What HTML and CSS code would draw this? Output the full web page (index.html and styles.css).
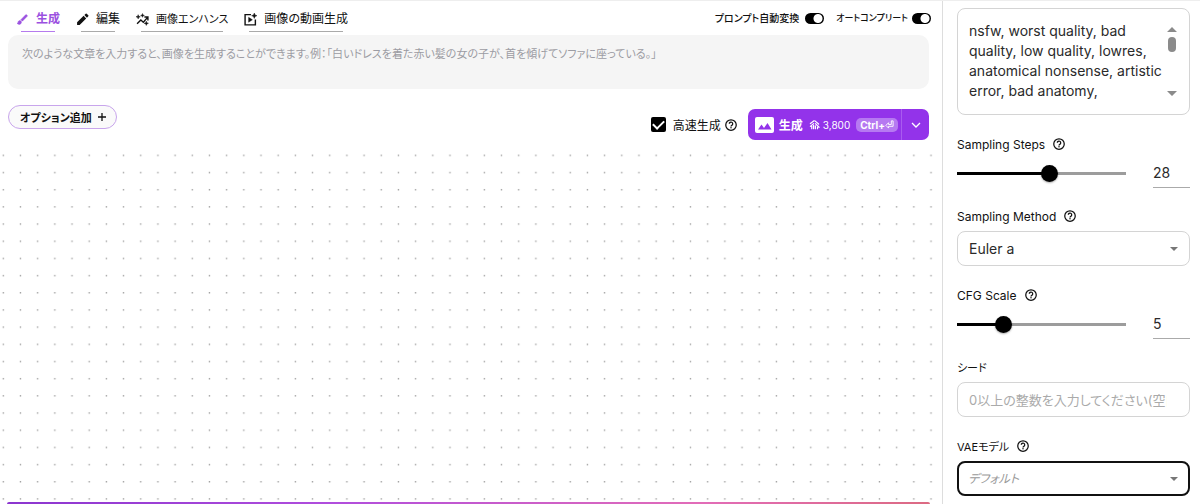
FILE: index.html
```html
<!DOCTYPE html>
<html lang="ja">
<head>
<meta charset="utf-8">
<meta name="viewport" content="width=device-width, initial-scale=1">
<title>画像生成</title>
<link rel="stylesheet" href="styles.css">
</head>
<body>
<svg class="defs" aria-hidden="true">
  <symbol id="help" viewBox="0 0 24 24"><circle cx="12" cy="12" r="10.500" fill="none" stroke="currentColor" stroke-width="2.500"/><path d="M8.600 9.700a3.400 3.400 0 1 1 5.300 2.700c-1.200.8-1.900 1.300-1.900 2.600" fill="none" stroke="currentColor" stroke-width="2.500"/><circle cx="12" cy="17.500" r="1.500" fill="currentColor"/></symbol>
</svg>
<div class="app">
  <main class="main">
    <header class="topbar">
      <nav class="tabs">
        <button class="tab active" type="button">
          <svg class="tab-icon" viewBox="0 0 24 24" fill="currentColor"><path d="M7 14c-1.660 0-3 1.340-3 3 0 1.310-1.160 2-2 2 .92 1.220 2.490 2 4 2 2.210 0 4-1.790 4-4 0-1.660-1.340-3-3-3zm13.710-9.370-1.340-1.340a1 1 0 0 0-1.410 0L9 12.250 11.750 15l8.960-8.960a1 1 0 0 0 0-1.410z" stroke="currentColor"/></svg>
          <span>生成</span>
        </button>
        <button class="tab" type="button">
          <svg class="tab-icon" viewBox="0 0 24 24" fill="currentColor"><path d="M2 17.250V22h4.750L18.800 9.940l-4.750-4.750zM22.700 6.040a1.300 1.300 0 0 0 0-1.800l-2.940-2.950a1.300 1.300 0 0 0-1.800 0l-2.500 2.500 4.750 4.750z"/></svg>
          <span>編集</span>
        </button>
        <button class="tab" type="button">
          <svg class="tab-icon" viewBox="0 0 24 24"><path d="M2 20l7-7 4.500 4L21 8.500M15.500 7.500H22V14" fill="none" stroke="currentColor" stroke-width="2.600"/><path d="M12 1l1 2.500L15.500 4.500 13 5.500 12 8l-1-2.500L8.500 4.500 11 3.500zM4 3l1.100 2.900L8 7 5.100 8.100 4 11 2.900 8.100 0 7l2.900-1.100zM19 15l1.100 2.900L23 19l-2.900 1.100L19 23l-1.100-2.900L15 19l2.900-1.100z" fill="currentColor" stroke="currentColor" stroke-width=".8"/></svg>
          <span class="kana">画像エンハンス</span>
        </button>
        <button class="tab" type="button">
          <svg class="tab-icon" viewBox="0 0 24 24"><path d="M13 3H2v19h19V12" fill="none" stroke="currentColor" stroke-width="2.600"/><path d="M8.500 8v9l7-4.500zM19 0l1.500 3.500L24 5l-3.500 1.500L19 10l-1.500-3.500L14 5l3.500-1.500z" fill="currentColor" stroke="currentColor" stroke-width=".8"/></svg>
          <span>画像の動画生成</span>
        </button>
      </nav>
      <div class="switches">
        <label class="switch-label">プロンプト自動変換<input class="switch" type="checkbox" role="switch" checked></label>
        <label class="switch-label all-kana">オートコンプリート<input class="switch" type="checkbox" role="switch" checked></label>
      </div>
    </header>
    <textarea class="prompt" rows="2" aria-label="プロンプト" placeholder="次のような文章を入力すると、画像を生成することができます。例：「白いドレスを着た赤い髪の女の子が、首を傾げてソファに座っている。」"></textarea>
    <div class="actions">
      <button class="options" type="button">オプション追加
        <svg class="plus" viewBox="0 0 10 10"><path d="M5 1v8M1 5h8" stroke="currentColor" stroke-width="1.300"/></svg>
      </button>
      <div class="run">
        <label class="fast"><input class="check" type="checkbox" checked>高速生成</label>
        <svg class="help fast-help"><use href="#help"/></svg>
        <div class="generate">
          <button class="generate-main" type="button">
            <svg class="picture" viewBox="0 0 19 16"><rect width="19" height="16" rx="2" fill="#fff"/><path d="M3 12.500l3.500-5 2.500 3.500L12.500 6l4 6.500z" fill="#9333ea"/></svg>
            <span class="generate-text">生成</span>
            <svg class="coin" viewBox="0 0 12 12" fill="none" stroke="#fff" stroke-width="1.300" stroke-linecap="round"><path d="M1.500 5L5.500 2M1.500 8L5 5M3 10.500V7.500M5 10.500V7M6.500 2l4 3.500M7 5l4 4M7 7.500v3M9.300 9v1.500"/></svg>
            <span class="cost">3,800</span>
            <span class="shortcut">Ctrl+<svg class="enter" viewBox="0 0 10 10" fill="none" stroke="currentColor"><path d="M7 1h2v6H4v2L1 6l3-3v2h3z"/></svg></span>
          </button>
          <button class="generate-more" type="button" aria-label="その他">
            <svg class="chevron" viewBox="0 0 10 10"><path d="M1 3l4 4 4-4" fill="none" stroke="#fff" stroke-width="1.300"/></svg>
          </button>
        </div>
      </div>
    </div>
    <div class="canvas">
      <svg class="dots" aria-hidden="true">
        <defs><pattern id="dot" width="17.180" height="17.180" patternUnits="userSpaceOnUse"><circle cx="3.300" cy="9.300" r=".8" fill="#999"/></pattern></defs>
        <rect width="100%" height="100%" fill="url(#dot)"/>
      </svg>
    </div>
    <div class="result-edge"></div>
  </main>
  <aside class="side">
    <div class="negative">
      <textarea class="negative-text" rows="4" aria-label="ネガティブプロンプト">nsfw, worst quality, bad quality, low quality, lowres, anatomical nonsense, artistic error, bad anatomy,</textarea>
      <svg class="scroll" viewBox="0 0 10 72" fill="#8b8b8b" aria-hidden="true"><path d="M0 6l5-5 5 5zM0 65h10l-5 5z"/><rect x="1" y="11" width="8" height="15" rx="4"/></svg>
    </div>
    <section class="field">
      <div class="label"><label for="steps">Sampling Steps</label><svg class="help"><use href="#help"/></svg></div>
      <div class="slide-row">
        <input class="slider" id="steps" type="range" min="1" max="50" value="28" style="--fill:55%">
        <input class="number" type="text" inputmode="numeric" value="28" aria-label="Sampling Steps">
      </div>
    </section>
    <section class="field">
      <div class="label"><label for="method">Sampling Method</label><svg class="help"><use href="#help"/></svg></div>
      <div class="select-box">
        <select class="control" id="method"><option>Euler a</option></select>
        <svg class="caret" viewBox="0 0 8 4" fill="#777"><path d="M0 0h8L4 4z"/></svg>
      </div>
    </section>
    <section class="field">
      <div class="label"><label for="cfg">CFG Scale</label><svg class="help"><use href="#help"/></svg></div>
      <div class="slide-row">
        <input class="slider" id="cfg" type="range" min="0" max="20" value="5" style="--fill:25%">
        <input class="number" type="text" inputmode="numeric" value="5" aria-label="CFG Scale">
      </div>
    </section>
    <section class="field">
      <div class="label kana"><label for="seed">シード</label></div>
      <input class="control seed" id="seed" type="text" placeholder="0以上の整数を入力してください(空白">
    </section>
    <section class="field">
      <div class="label kana"><label for="vae">VAEモデル</label><svg class="help"><use href="#help"/></svg></div>
      <div class="select-box">
        <select class="control focused" id="vae"><option>デフォルト</option></select>
        <svg class="caret" viewBox="0 0 8 4" fill="#777"><path d="M0 0h8L4 4z"/></svg>
      </div>
    </section>
  </aside>
</div>
</body>
</html>
```
FILE: styles.css
```css
* { box-sizing: border-box; }
body {
  margin: 0;
  background: #fff;
  color: #111;
  font-family: Inter, "Noto Sans CJK JP", sans-serif;
  font-size: 12px;
  font-feature-settings: "palt";
}
button, input, select, textarea {
  margin: 0;
  font: inherit;
  font-feature-settings: inherit;
  color: inherit;
}
button { padding: 0; border: 0; background: none; cursor: pointer; }
svg { display: block; flex: none; }
.defs { position: absolute; width: 0; height: 0; }
.kana { font-size: 11px; }

.app {
  display: grid;
  grid-template-columns: minmax(0, 1fr) 258px;
  min-height: 100vh;
  border-top: 1px solid #eee;
}
.main { display: flex; flex-direction: column; min-width: 0; }

.topbar {
  display: flex;
  justify-content: space-between;
  height: 34px;
  padding: 9px 11px 0 16px;
}
.tabs { display: flex; align-items: flex-start; gap: 16px; }
.tab {
  display: grid;
  grid-template-columns: auto auto;
  align-items: center;
  column-gap: 7px;
  row-gap: 3px;
  line-height: 18px;
}
.tab::after {
  content: "";
  grid-column: 1 / -1;
  height: 1px;
  margin: 0 5px;
  background: #aaa;
}
.tab.active { color: #9b51e0; font-weight: 700; }
.tab.active::after { background: #b57bed; }
.tab-icon { width: 13px; height: 13px; }
.switches { display: flex; align-items: flex-start; gap: 12px; }
.switch-label {
  display: flex;
  align-items: center;
  gap: 6px;
  font-size: 10px;
  font-weight: 500;
  line-height: 16px;
}
.all-kana { gap: 4px; font-size: 9px; }
.switch {
  appearance: none;
  width: 19px;
  height: 11px;
  border-radius: 6px;
  background: radial-gradient(circle at 13px 50%, #fff 4px, #000 5px);
}

.prompt {
  display: block;
  height: 54px;
  margin: 0 13px 0 8px;
  padding: 9px 14px;
  border: 0;
  border-radius: 10px;
  background: #f5f5f5;
  font-size: 11px;
  line-height: 20px;
  resize: none;
  overflow: hidden;
}
.prompt::placeholder { color: #9c9ca3; }

.actions {
  display: flex;
  justify-content: space-between;
  align-items: flex-start;
  padding: 16px 13px 6px 8px;
}
.options {
  display: flex;
  align-items: center;
  gap: 5px;
  height: 24px;
  padding: 0 9px 0 11px;
  border: 1px solid #c8a5ec;
  border-radius: 12px;
  background: linear-gradient(90deg, #f0608a, #8b2fd6) 32px 0 / 37px 1px no-repeat border-box, #fafafa;
  font-size: 11px;
  font-weight: 700;
}
.plus { width: 10px; height: 10px; }
.run { display: flex; align-items: center; padding-top: 4px; }
.fast { display: flex; align-items: center; gap: 7px; }
.check {
  appearance: none;
  display: grid;
  place-items: center;
  width: 15px;
  height: 15px;
  border-radius: 2px;
  background: #000;
}
.check::after {
  content: "";
  width: 9px;
  height: 5px;
  margin-bottom: 3px;
  border: solid #fff;
  border-width: 0 0 2px 2px;
  rotate: -45deg;
}
.help { width: 12px; height: 12px; }
.fast-help { margin: 0 11px 0 4px; }
.generate {
  display: flex;
  height: 31px;
  border-radius: 7px;
  background: #9333ea;
  color: #fff;
}
.generate-main { display: flex; align-items: center; padding: 0 3px 0 7px; }
.picture { width: 19px; height: 16px; margin-right: 5px; }
.generate-text { margin-right: 6px; font-weight: 700; }
.coin { width: 11px; height: 11px; margin-right: 3px; }
.cost { margin-right: 6px; font-size: 10px; }
.shortcut {
  display: flex;
  align-items: center;
  padding: 0 4px;
  border-radius: 5px;
  background: #b679f1;
  font-size: 10px;
  font-weight: 700;
  line-height: 14px;
}
.enter { width: 9px; height: 9px; }
.generate-more {
  display: grid;
  place-items: center;
  width: 28px;
  border-left: 1px solid #a95bef;
}
.chevron { width: 10px; height: 10px; }

.canvas { display: grid; flex: 1; min-height: 100px; margin-right: 9px; }
.dots { width: 100%; height: 100%; }
.result-edge {
  height: 2px;
  margin: 0 12px 0 7px;
  border-radius: 2px 2px 0 0;
  background: linear-gradient(90deg, #8b35cf, #b04ddd 35%, #e26cb8 75%, #dc6a82);
}

.side {
  display: flex;
  flex-direction: column;
  gap: 19px;
  padding: 7px 10px 7px 14px;
  border-left: 1px solid #ddd;
}
.negative {
  display: flex;
  height: 107px;
  padding: 12px;
  padding-left: 11px;
  border: 1px solid #d4d4d4;
  border-radius: 8px;
}
.negative-text {
  flex: 1;
  min-width: 0;
  padding: 0;
  border: 0;
  outline: 0;
  background: none;
  color: #2a2a2a;
  font-size: 14px;
  line-height: 20px;
  resize: none;
  overflow: hidden;
}
.scroll { width: 10px; height: 72px; margin-top: 5px; }
.label { display: flex; align-items: center; gap: 8px; height: 20px; }
.slide-row {
  display: flex;
  align-items: center;
  gap: 27px;
  height: 33px;
  padding-top: 5px;
}
.slider {
  appearance: none;
  flex: 1;
  min-width: 0;
  height: 17px;
  background: linear-gradient(90deg, #000 var(--fill), #9c9c9c var(--fill)) center / 100% 3px no-repeat;
}
.slider::-webkit-slider-thumb {
  appearance: none;
  width: 17px;
  height: 17px;
  border-radius: 50%;
  background: #000;
  box-shadow: 0 1px 2px #0005;
}
.number {
  width: 37px;
  height: 29px;
  padding: 0;
  border: 0;
  border-bottom: 1px solid #aaa;
  background: none;
  color: #2a2a2a;
  font-size: 14px;
}
.select-box { display: grid; align-items: center; }
.select-box > * { grid-area: 1 / 1; }
.control {
  appearance: none;
  width: 100%;
  height: 35px;
  margin-top: 5px;
  padding: 0 22px 0 11px;
  border: 1px solid #d4d4d4;
  border-radius: 8px;
  background: #fff;
  color: #2a2a2a;
  font-size: 14px;
}
.seed { font-size: 13px; }
.seed::placeholder { color: #aaa; }
.focused { padding-left: 9px; border: 2px solid #111; color: #999; font-size: 12px; font-style: italic; }
.caret { justify-self: end; width: 8px; height: 4px; margin: 5px 12px 0 0; pointer-events: none; }
```
